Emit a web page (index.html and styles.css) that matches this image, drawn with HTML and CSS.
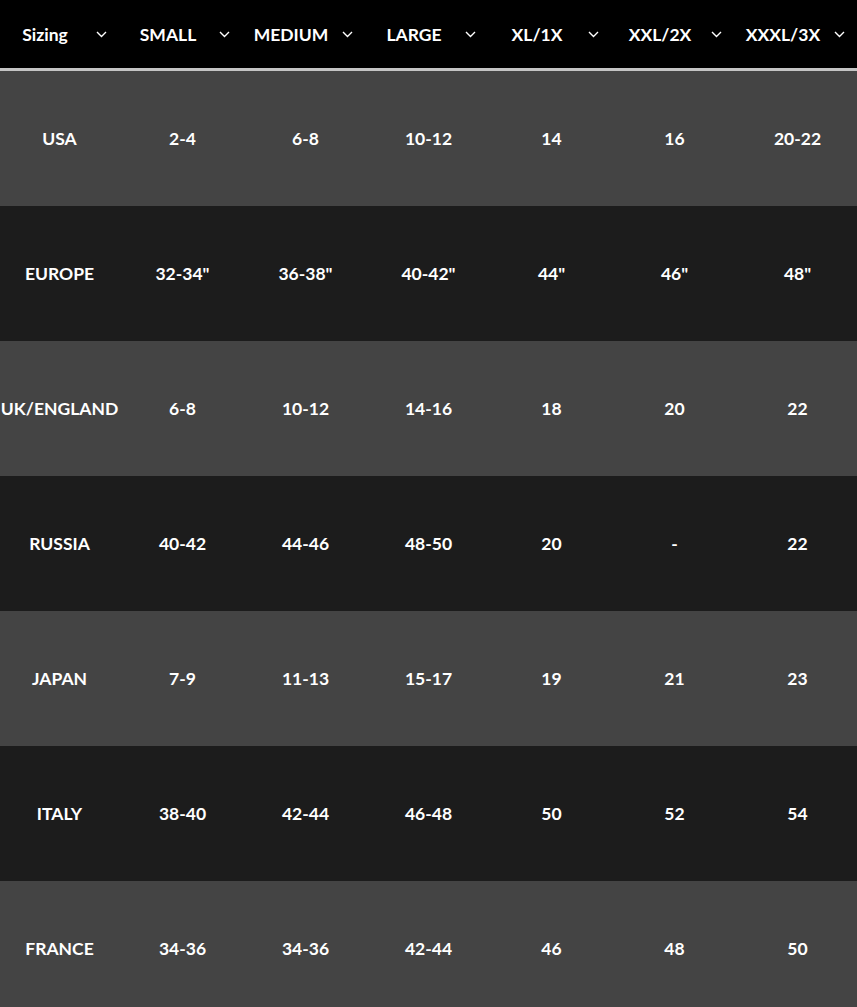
FILE: index.html
```html
<!DOCTYPE html>
<html>
<head>
<meta charset="utf-8">
<link rel="stylesheet" href="styles.css">
</head>
<body>
<div class="table">
  <div class="row head">
    <div class="hcell"><span class="label">Sizing</span><span class="chev"><svg width="11" height="7" viewBox="0 0 11 7"><path d="M1 1l4.5 4.5L10 1" fill="none" stroke="#fff" stroke-width="1.4"/></svg></span></div>
    <div class="hcell"><span class="label">SMALL</span><span class="chev"><svg width="11" height="7" viewBox="0 0 11 7"><path d="M1 1l4.5 4.5L10 1" fill="none" stroke="#fff" stroke-width="1.4"/></svg></span></div>
    <div class="hcell"><span class="label">MEDIUM</span><span class="chev"><svg width="11" height="7" viewBox="0 0 11 7"><path d="M1 1l4.5 4.5L10 1" fill="none" stroke="#fff" stroke-width="1.4"/></svg></span></div>
    <div class="hcell"><span class="label">LARGE</span><span class="chev"><svg width="11" height="7" viewBox="0 0 11 7"><path d="M1 1l4.5 4.5L10 1" fill="none" stroke="#fff" stroke-width="1.4"/></svg></span></div>
    <div class="hcell"><span class="label">XL/1X</span><span class="chev"><svg width="11" height="7" viewBox="0 0 11 7"><path d="M1 1l4.5 4.5L10 1" fill="none" stroke="#fff" stroke-width="1.4"/></svg></span></div>
    <div class="hcell"><span class="label">XXL/2X</span><span class="chev"><svg width="11" height="7" viewBox="0 0 11 7"><path d="M1 1l4.5 4.5L10 1" fill="none" stroke="#fff" stroke-width="1.4"/></svg></span></div>
    <div class="hcell"><span class="label">XXXL/3X</span><span class="chev"><svg width="11" height="7" viewBox="0 0 11 7"><path d="M1 1l4.5 4.5L10 1" fill="none" stroke="#fff" stroke-width="1.4"/></svg></span></div>
  </div>
  <div class="row light"><div class="cell">USA</div><div class="cell">2-4</div><div class="cell">6-8</div><div class="cell">10-12</div><div class="cell">14</div><div class="cell">16</div><div class="cell">20-22</div></div>
  <div class="row dark"><div class="cell">EUROPE</div><div class="cell">32-34"</div><div class="cell">36-38"</div><div class="cell">40-42"</div><div class="cell">44"</div><div class="cell">46"</div><div class="cell">48"</div></div>
  <div class="row light"><div class="cell">UK/ENGLAND</div><div class="cell">6-8</div><div class="cell">10-12</div><div class="cell">14-16</div><div class="cell">18</div><div class="cell">20</div><div class="cell">22</div></div>
  <div class="row dark"><div class="cell">RUSSIA</div><div class="cell">40-42</div><div class="cell">44-46</div><div class="cell">48-50</div><div class="cell">20</div><div class="cell">-</div><div class="cell">22</div></div>
  <div class="row light"><div class="cell">JAPAN</div><div class="cell">7-9</div><div class="cell">11-13</div><div class="cell">15-17</div><div class="cell">19</div><div class="cell">21</div><div class="cell">23</div></div>
  <div class="row dark"><div class="cell">ITALY</div><div class="cell">38-40</div><div class="cell">42-44</div><div class="cell">46-48</div><div class="cell">50</div><div class="cell">52</div><div class="cell">54</div></div>
  <div class="row light"><div class="cell">FRANCE</div><div class="cell">34-36</div><div class="cell">34-36</div><div class="cell">42-44</div><div class="cell">46</div><div class="cell">48</div><div class="cell">50</div></div>
</div>
</body>
</html>
```
FILE: styles.css
```css
html, body {
  margin: 0;
  padding: 0;
  background: #444444;
  overflow: hidden;
}
.table {
  width: 861px;
  margin-left: -2px;
  font-family: "Lato", "Open Sans", sans-serif;
  font-weight: 700;
  color: #ffffff;
  font-size: 17.5px;
}
.row {
  display: grid;
  grid-template-columns: repeat(7, 123px);
}
.head {
  background: #000000;
  height: 68px;
  border-bottom: 3px solid #c4c4c4;
}
.hcell {
  display: flex;
  align-items: center;
}
.label {
  flex: 1;
  text-align: center;
}
.chev {
  width: 29px;
  display: flex;
  align-items: center;
  padding-left: 4px;
  box-sizing: border-box;
  margin-top: 1px;
}
.light { background: #444444; height: 135px; }
.dark { background: #1c1c1c; height: 135px; }
.cell {
  display: flex;
  align-items: center;
  justify-content: center;
  white-space: nowrap;
}
```
